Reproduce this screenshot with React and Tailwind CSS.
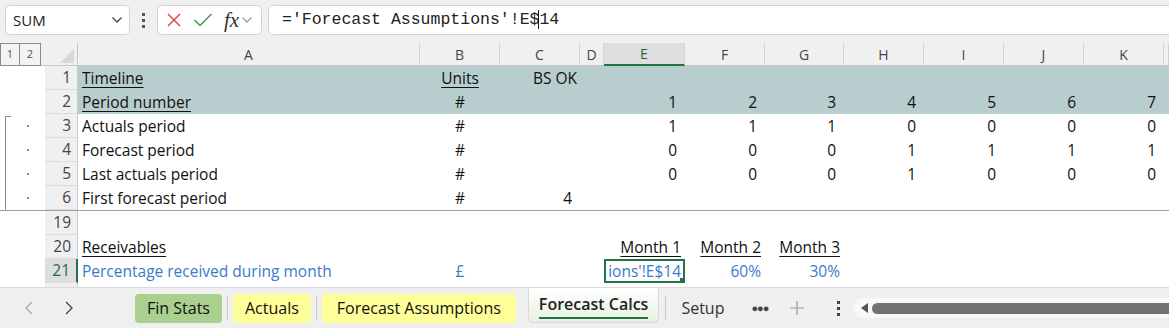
import React from "react";

const cols = "grid-cols-[45px_33px_342px_80px_80px_24px_81px_80px_79px_80px_80px_80px_80px_1fr]";
const letters = ["A", "B", "C", "D", "E", "F", "G", "H", "I", "J", "K", ""];

function Chevron({ className = "" }) {
  return (
    <svg width="12" height="8" viewBox="0 0 12 8" className={className}>
      <path d="M1.5 1.5 L6 6 L10.5 1.5" fill="none" stroke="currentColor" strokeWidth="1.3" />
    </svg>
  );
}

function Row({ n, teal, outline, selected, children }) {
  return (
    <div className={`grid ${cols} h-[24px]`}>
      <div className="relative bg-white">
        {outline === "start" && (
          <div className="absolute left-[5px] top-[2px] bottom-0 w-[6px] border-l border-t border-[#8a8a8a]" />
        )}
        {outline && outline !== "start" && (
          <div className="absolute left-[5px] top-0 bottom-0 border-l border-[#8a8a8a]" />
        )}
        {outline && <div className="absolute left-[27px] top-[11px] w-[2px] h-[2px] bg-[#888]" />}
      </div>
      <div
        className={`flex items-center justify-end pr-[6px] border-b border-[#dcdcdc] ${
          selected
            ? "bg-[#dedede] text-[#1e6b41] border-r-2 border-r-[#217346]"
            : "bg-[#f0f0f0] text-[#444] border-r border-r-[#c8c8c8]"
        }`}
      >
        {n}
      </div>
      {children.map((c, i) => (
        <div
          key={i}
          className={`relative flex items-center min-w-0 ${teal ? "bg-[#b8cdcd]" : "bg-white"}`}
        >
          {c}
        </div>
      ))}
    </div>
  );
}

const L = ({ children, u, blue }) => (
  <span className={`pl-1 whitespace-nowrap ${u ? "underline underline-offset-[3px]" : ""} ${blue ? "text-[#3a7bc8]" : ""}`}>
    {children}
  </span>
);
const C = ({ children, u, blue }) => (
  <span className={`w-full text-center whitespace-nowrap ${blue ? "text-[#3a7bc8]" : ""}`}>
    <span className={u ? "underline underline-offset-[3px]" : ""}>{children}</span>
  </span>
);
const R = ({ children, u, blue, pr = "pr-2" }) => (
  <span className={`w-full text-right whitespace-nowrap ${pr} ${blue ? "text-[#3a7bc8]" : ""}`}>
    <span className={u ? "underline underline-offset-[3px]" : ""}>{children}</span>
  </span>
);

function nums(arr) {
  return arr.map((v, i) => <R key={i}>{v}</R>);
}

const empty = ["", "", "", "", "", "", "", "", "", "", "", ""];

export default function App() {
  const font = { fontFamily: "'Open Sans', 'Noto Sans', sans-serif" };
  return (
    <div className="w-[1169px] h-[328px] overflow-hidden bg-[#f0f0f0] text-[15.5px] text-[#111] flex flex-col" style={font}>
      {/* formula bar */}
      <div className="h-[43px] flex items-start pt-[5px] pl-[5px] shrink-0">
        <div className="w-[125px] h-[30px] bg-white border border-[#d3d3d3] rounded-[5px] flex items-center justify-between pl-[7px] pr-[6px]">
          <span className="text-[15px] text-[#222]">SUM</span>
          <Chevron className="text-[#444]" />
        </div>
        <div className="w-[27px] h-[30px] flex flex-col items-center justify-center gap-[3px]">
          <div className="w-[3px] h-[3px] bg-[#555]" />
          <div className="w-[3px] h-[3px] bg-[#555]" />
          <div className="w-[3px] h-[3px] bg-[#555]" />
        </div>
        <div className="w-[105px] h-[30px] bg-white border border-[#d3d3d3] rounded-[5px] flex items-center pl-[8px]">
          <svg width="16" height="16" viewBox="0 0 16 16">
            <path d="M2 2 L14 14 M14 2 L2 14" stroke="#e8383d" strokeWidth="1.4" fill="none" />
          </svg>
          <svg width="20" height="16" viewBox="0 0 20 16" className="ml-[11px]">
            <path d="M1.5 8 L7 13.5 L18.5 2" stroke="#3f9b4c" strokeWidth="1.5" fill="none" />
          </svg>
          <span className="ml-[11px] italic text-[21px] text-[#333] leading-none" style={{ fontFamily: "'Liberation Serif', serif" }}>
            fx
          </span>
          <Chevron className="ml-[2px] text-[#999]" />
        </div>
        <div className="ml-[6px] flex-1 h-[30px] bg-white border border-[#d3d3d3] border-r-0 rounded-l-[5px] flex items-center pl-[13px]">
          <span className="text-[16.5px] text-[#222] whitespace-pre" style={{ fontFamily: "'Liberation Mono', monospace" }}>
            ='Forecast Assumptions'!E$<span className="border-l border-[#111] -ml-[1px]">14</span>
          </span>
        </div>
      </div>

      {/* column header */}
      <div className={`grid ${cols} h-[23px] shrink-0 bg-[#f0f0f0] border-b border-[#c8c8c8] text-[14px] text-[#444]`}>
        <div className="flex h-[23px]">
          <div className="w-[20px] border border-[#8a8a8a] bg-[#f3f3f3] flex items-center justify-center text-[11px] text-[#555]">1</div>
          <div className="w-[21px] border border-l-0 border-[#8a8a8a] bg-[#f3f3f3] flex items-center justify-center text-[11px] text-[#555]">2</div>
        </div>
        <div className="relative border-r border-[#c8c8c8]">
          <svg width="14" height="14" viewBox="0 0 14 14" className="absolute right-[3px] bottom-[3px]">
            <path d="M14 0 L14 14 L0 14 Z" fill="#d8d8d8" />
          </svg>
        </div>
        {letters.map((l, i) => (
          <div
            key={i}
            className={`flex items-center justify-center border-r border-[#d4d4d4] ${
              l === "E" ? "bg-[#dedede] text-[#1e6b41] border-b-2 border-b-[#217346]" : ""
            }`}
          >
            {l}
          </div>
        ))}
      </div>

      {/* rows */}
      <div className="flex flex-col shrink-0">
        <Row n="1" teal>
          {[<L u>Timeline</L>, <C u>Units</C>, <span className="pl-[33px] whitespace-nowrap">BS OK</span>, "", "", "", "", "", "", "", "", ""]}
        </Row>
        <Row n="2" teal>
          {[<L u>Period number</L>, <C>#</C>, "", "", ...nums([1, 2, 3, 4, 5, 6, 7]), ""]}
        </Row>
        <Row n="3" outline="start">
          {[<L>Actuals period</L>, <C>#</C>, "", "", ...nums([1, 1, 1, 0, 0, 0, 0]), ""]}
        </Row>
        <Row n="4" outline="mid">
          {[<L>Forecast period</L>, <C>#</C>, "", "", ...nums([0, 0, 0, 1, 1, 1, 1]), ""]}
        </Row>
        <Row n="5" outline="mid">
          {[<L>Last actuals period</L>, <C>#</C>, "", "", ...nums([0, 0, 0, 1, 0, 0, 0]), ""]}
        </Row>
        <Row n="6" outline="mid">
          {[<L>First forecast period</L>, <C>#</C>, <R>4</R>, "", "", "", "", "", "", "", "", ""]}
        </Row>
        <div className="h-[1px] bg-[#9e9e9e]" />
        <Row n="19">{empty}</Row>
        <Row n="20">
          {[<L u>Receivables</L>, "", "", "", <R u pr="pr-1">Month 1</R>, <R u pr="pr-1">Month 2</R>, <R u pr="pr-1">Month 3</R>, "", "", "", "", ""]}
        </Row>
        <Row n="21" selected>
          {[
            <L blue>Percentage received during month</L>,
            <C blue>£</C>,
            "",
            "",
            <div className="absolute inset-0 border-2 border-[#217346] overflow-hidden flex items-center justify-end pr-[2px]">
              <span className="whitespace-nowrap text-[#3a7bc8]">ions'!E$14</span>
              <div className="absolute right-[-2px] bottom-[-2px] w-[5px] h-[5px] bg-[#217346]" />
            </div>,
            <R blue pr="pr-1">60%</R>,
            <R blue pr="pr-1">30%</R>,
            "",
            "",
            "",
            "",
            "",
          ]}
        </Row>
        <Row n="22">{empty}</Row>
      </div>

      {/* sheet tabs */}
      <div className="relative flex-1 border-t border-[#dadada] bg-[#efefef] flex items-center pl-[22px] z-10 -mt-[20px] text-[16px]">
        <svg width="14" height="16" viewBox="0 0 14 16" className="text-[#a8a8a8]">
          <path d="M10 2 L4 8 L10 14" fill="none" stroke="currentColor" strokeWidth="1.3" />
        </svg>
        <svg width="14" height="16" viewBox="0 0 14 16" className="ml-[26px] text-[#444]">
          <path d="M4 2 L10 8 L4 14" fill="none" stroke="currentColor" strokeWidth="1.3" />
        </svg>
        <div className="ml-[59px] h-[29px] px-[12px] rounded-[4px] bg-[#a9d08e] flex items-center">Fin Stats</div>
        <div className="mx-[5px] w-px h-[24px] bg-[#c8c8c8]" />
        <div className="h-[29px] px-[12px] rounded-[4px] bg-[#ffff99] flex items-center">Actuals</div>
        <div className="mx-[5px] w-px h-[24px] bg-[#c8c8c8]" />
        <div className="h-[29px] px-[15px] rounded-[4px] bg-[#ffff99] flex items-center">Forecast Assumptions</div>
        <div className="ml-[12px] self-start h-[35px] px-[10px] rounded-b-[6px] border border-t-0 border-[#d8d8d8] bg-gradient-to-b from-white to-[#e6f1e1] flex flex-col items-center justify-center">
          <span className="font-semibold text-[#222]">Forecast Calcs</span>
          <div className="self-stretch h-[2px] bg-[#217346] mt-[1px]" />
        </div>
        <div className="ml-[6px] w-px h-[24px] bg-[#c8c8c8]" />
        <span className="ml-[15px] text-[#333]">Setup</span>
        <span className="ml-[27px] text-[11px] text-[#444] tracking-[-1px]">●●●</span>
        <svg width="16" height="16" viewBox="0 0 16 16" className="ml-[21px]">
          <path d="M8 1 V15 M1 8 H15" stroke="#999" strokeWidth="1.2" />
        </svg>
        <div className="ml-[32px] flex flex-col gap-[3px]">
          <div className="w-[3px] h-[3px] bg-[#444]" />
          <div className="w-[3px] h-[3px] bg-[#444]" />
          <div className="w-[3px] h-[3px] bg-[#444]" />
        </div>
        <div className="ml-[13px] flex-1 h-[20px] bg-[#f8f8f8] rounded-l-full flex items-center pl-[8px]">
          <svg width="8" height="10" viewBox="0 0 8 10">
            <path d="M7 0 L0 5 L7 10 Z" fill="#555" />
          </svg>
          <div className="ml-[3px] flex-1 h-[11px] rounded-l-full bg-[#717171]" />
        </div>
      </div>
    </div>
  );
}
